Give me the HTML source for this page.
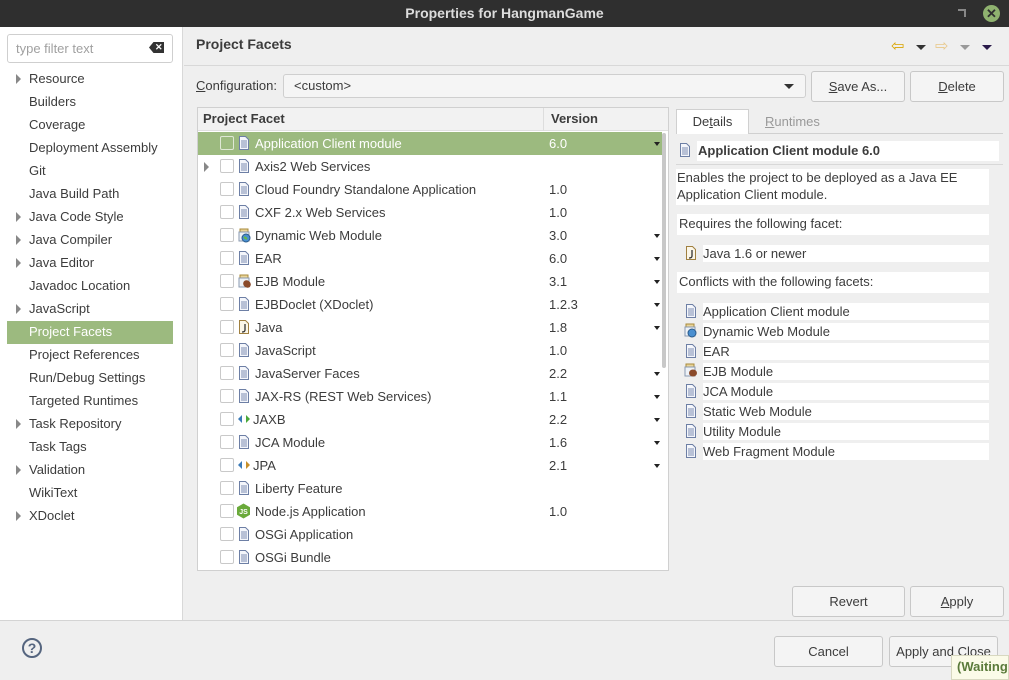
<!DOCTYPE html>
<html><head><meta charset="utf-8"><style>
*{margin:0;padding:0;box-sizing:border-box}
body{width:1009px;height:680px;overflow:hidden;background:#efefef;font-family:"Liberation Sans",sans-serif;font-size:13px;color:#3c3c3c;position:relative}
.a{position:absolute;white-space:nowrap}
.title{left:0;top:0;width:1009px;height:27px;background:#2f2f2f;color:#dcdcdc;font-weight:bold;font-size:14px;text-align:center;line-height:27px}
.left{left:0;top:27px;width:183px;height:593px;background:#fff;border-right:1px solid #d8d8d8}
.ti{left:29px;height:22px;line-height:22px}
.tri{width:0;height:0;border-left:5px solid #888;border-top:5px solid transparent;border-bottom:5px solid transparent}
.btn{background:#f4f4f4;border:1px solid #c8c8c8;border-radius:3px;text-align:center;line-height:29px;height:31px}
.row{left:198px;width:464px;height:23px;line-height:23px}
.cb{position:absolute;left:22px;top:4px;width:14px;height:14px;border:1px solid #c9c9c9;border-radius:2px;background:#fff}
.ic{position:absolute;left:40px;top:4px}
.nm{position:absolute;left:57px}
.vr{position:absolute;left:351px}
.dd{position:absolute;left:456px;top:10px;border-top:4px solid #222;border-left:3px solid transparent;border-right:3px solid transparent}
.sel{background:#9cba7f;color:#fff}
.box{background:#fff;height:20px;line-height:20px}
u{text-decoration:underline}
</style></head><body>
<div class="a title">Properties for HangmanGame</div>
<div class="a" style="left:958px;top:9px;width:8px;height:8px;border-top:2px solid #888;border-right:2px solid #888;transform:rotate(0deg)"></div>
<div class="a" style="left:983px;top:5px;width:17px;height:17px;border-radius:50%;background:#8fb26f;color:#2f2f2f;font-weight:bold;text-align:center;line-height:17px;font-size:13px">✕</div>

<div class="a left"></div>
<div class="a" style="left:7px;top:34px;width:166px;height:29px;border:1px solid #cfcfcf;border-radius:3px;background:#fff;color:#a0a0a0;line-height:27px;padding-left:8px">type filter text</div>
<div class="a" style="left:149px;top:42px;width:15px;height:11px;background:#333;clip-path:polygon(30% 0,100% 0,100% 100%,30% 100%,0 50%)"></div>
<div class="a" style="left:155px;top:42px;color:#fff;font-size:9px;line-height:11px;font-weight:bold">✕</div>

<div class="a" style="left:7px;top:321px;width:166px;height:23px;background:#9cba7f"></div>
<div class="a tri" style="left:16px;top:74px"></div><div class="a ti" style="top:68px">Resource</div>
<div class="a ti" style="top:91px">Builders</div>
<div class="a ti" style="top:114px">Coverage</div>
<div class="a ti" style="top:137px">Deployment Assembly</div>
<div class="a ti" style="top:160px">Git</div>
<div class="a ti" style="top:183px">Java Build Path</div>
<div class="a tri" style="left:16px;top:212px"></div><div class="a ti" style="top:206px">Java Code Style</div>
<div class="a tri" style="left:16px;top:235px"></div><div class="a ti" style="top:229px">Java Compiler</div>
<div class="a tri" style="left:16px;top:258px"></div><div class="a ti" style="top:252px">Java Editor</div>
<div class="a ti" style="top:275px">Javadoc Location</div>
<div class="a tri" style="left:16px;top:304px"></div><div class="a ti" style="top:298px">JavaScript</div>
<div class="a ti" style="top:321px;color:#fff">Project Facets</div>
<div class="a ti" style="top:344px">Project References</div>
<div class="a ti" style="top:367px">Run/Debug Settings</div>
<div class="a ti" style="top:390px">Targeted Runtimes</div>
<div class="a tri" style="left:16px;top:419px"></div><div class="a ti" style="top:413px">Task Repository</div>
<div class="a ti" style="top:436px">Task Tags</div>
<div class="a tri" style="left:16px;top:465px"></div><div class="a ti" style="top:459px">Validation</div>
<div class="a ti" style="top:482px">WikiText</div>
<div class="a tri" style="left:16px;top:511px"></div><div class="a ti" style="top:505px">XDoclet</div>

<div class="a" style="left:196px;top:36px;font-size:14px;font-weight:bold">Project Facets</div>
<div class="a" style="left:184px;top:65px;width:825px;height:1px;background:#d8d8d8"></div>
<div class="a" style="left:891px;top:40px;color:#d9a400;font-size:16px;line-height:14px">⇦</div>
<div class="a" style="left:916px;top:45px;border-top:5px solid #333;border-left:5px solid transparent;border-right:5px solid transparent"></div>
<div class="a" style="left:935px;top:40px;color:#e8c88a;font-size:16px;line-height:14px">⇨</div>
<div class="a" style="left:960px;top:45px;border-top:5px solid #999;border-left:5px solid transparent;border-right:5px solid transparent"></div>
<div class="a" style="left:982px;top:45px;border-top:5px solid #2a1a4a;border-left:5px solid transparent;border-right:5px solid transparent"></div>

<div class="a" style="left:196px;top:78px"><u>C</u>onfiguration:</div>
<div class="a" style="left:283px;top:74px;width:523px;height:24px;border:1px solid #cfcfcf;border-radius:3px;background:#f5f5f5;line-height:22px;padding-left:10px">&lt;custom&gt;</div>
<div class="a" style="left:784px;top:84px;border-top:5px solid #333;border-left:5px solid transparent;border-right:5px solid transparent"></div>
<div class="a btn" style="left:811px;top:71px;width:94px"><u>S</u>ave As...</div>
<div class="a btn" style="left:910px;top:71px;width:94px"><u>D</u>elete</div>

<div class="a" style="left:197px;top:107px;width:472px;height:464px;border:1px solid #d0d0d0;background:#fff"></div>
<div class="a" style="left:198px;top:108px;width:470px;height:23px;background:#f2f2f2;border-bottom:1px solid #e0e0e0;font-weight:bold;line-height:22px"><span style="position:absolute;left:5px">Project Facet</span><span style="position:absolute;left:345px;top:0;height:23px;border-left:1px solid #ddd"></span><span style="position:absolute;left:353px">Version</span></div>
<div class="a" style="left:662px;top:133px;width:4px;height:235px;background:#c8c8c8;border-radius:2px"></div>

<div class="a row sel" style="top:132px"><div class="cb" style="background:transparent;border-color:#dfe8d5"></div><svg class="ic" width="12" height="14"><path d="M1.5 .5h6l3 3v10h-9z" fill="#f4f6fb" stroke="#6d7fa5"/><path d="M3 5h6M3 7h6M3 9h6M3 11h6" stroke="#7b8cb0"/></svg><span class="nm">Application Client module</span><span class="vr">6.0</span><span class="dd"></span></div>
<div class="a row" style="top:155px"><div class="a tri" style="left:6px;top:7px"></div><div class="cb"></div><svg class="ic" width="12" height="14"><path d="M1.5 .5h6l3 3v10h-9z" fill="#f4f6fb" stroke="#6d7fa5"/><path d="M3 5h6M3 7h6M3 9h6M3 11h6" stroke="#7b8cb0"/></svg><span class="nm">Axis2 Web Services</span></div>
<div class="a row" style="top:178px"><div class="cb"></div><svg class="ic" width="12" height="14"><path d="M1.5 .5h6l3 3v10h-9z" fill="#f4f6fb" stroke="#6d7fa5"/><path d="M3 5h6M3 7h6M3 9h6M3 11h6" stroke="#7b8cb0"/></svg><span class="nm">Cloud Foundry Standalone Application</span><span class="vr">1.0</span></div>
<div class="a row" style="top:201px"><div class="cb"></div><svg class="ic" width="12" height="14"><path d="M1.5 .5h6l3 3v10h-9z" fill="#f4f6fb" stroke="#6d7fa5"/><path d="M3 5h6M3 7h6M3 9h6M3 11h6" stroke="#7b8cb0"/></svg><span class="nm">CXF 2.x Web Services</span><span class="vr">1.0</span></div>
<div class="a row" style="top:224px"><div class="cb"></div><svg class="ic" width="15" height="15" style="left:39px"><rect x="3" y="1" width="8" height="3" fill="#e8d49a" stroke="#a88a3a"/><path d="M2 4h10v9H2z" fill="#eef2f7" stroke="#8a9ab0"/><circle cx="9" cy="10" r="4" fill="#4a8fd0" stroke="#2a5a8a"/><path d="M7 9l3 2" stroke="#6b4" stroke-width="2"/></svg><span class="nm">Dynamic Web Module</span><span class="vr">3.0</span><span class="dd"></span></div>
<div class="a row" style="top:247px"><div class="cb"></div><svg class="ic" width="12" height="14"><path d="M1.5 .5h6l3 3v10h-9z" fill="#f4f6fb" stroke="#6d7fa5"/><path d="M3 5h6M3 7h6M3 9h6M3 11h6" stroke="#7b8cb0"/></svg><span class="nm">EAR</span><span class="vr">6.0</span><span class="dd"></span></div>
<div class="a row" style="top:270px"><div class="cb"></div><svg class="ic" width="15" height="15" style="left:39px"><rect x="3" y="1" width="8" height="3" fill="#e8d49a" stroke="#a88a3a"/><path d="M2 4h10v9H2z" fill="#eef2f7" stroke="#8a9ab0"/><ellipse cx="10" cy="10" rx="4" ry="3.5" fill="#8a4a2a" transform="rotate(40 10 10)"/></svg><span class="nm">EJB Module</span><span class="vr">3.1</span><span class="dd"></span></div>
<div class="a row" style="top:293px"><div class="cb"></div><svg class="ic" width="12" height="14"><path d="M1.5 .5h6l3 3v10h-9z" fill="#f4f6fb" stroke="#6d7fa5"/><path d="M3 5h6M3 7h6M3 9h6M3 11h6" stroke="#7b8cb0"/></svg><span class="nm">EJBDoclet (XDoclet)</span><span class="vr">1.2.3</span><span class="dd"></span></div>
<div class="a row" style="top:316px"><div class="cb"></div><svg class="ic" width="12" height="14"><path d="M1.5 .5h6l3 3v10h-9z" fill="#fbf6e8" stroke="#a08040"/><path d="M7 4v6q0 2-3 2" stroke="#333" fill="none" stroke-width="1.3"/></svg><span class="nm">Java</span><span class="vr">1.8</span><span class="dd"></span></div>
<div class="a row" style="top:339px"><div class="cb"></div><svg class="ic" width="12" height="14"><path d="M1.5 .5h6l3 3v10h-9z" fill="#f4f6fb" stroke="#6d7fa5"/><path d="M3 5h6M3 7h6M3 9h6M3 11h6" stroke="#7b8cb0"/></svg><span class="nm">JavaScript</span><span class="vr">1.0</span></div>
<div class="a row" style="top:362px"><div class="cb"></div><svg class="ic" width="12" height="14"><path d="M1.5 .5h6l3 3v10h-9z" fill="#f4f6fb" stroke="#6d7fa5"/><path d="M3 5h6M3 7h6M3 9h6M3 11h6" stroke="#7b8cb0"/></svg><span class="nm">JavaServer Faces</span><span class="vr">2.2</span><span class="dd"></span></div>
<div class="a row" style="top:385px"><div class="cb"></div><svg class="ic" width="12" height="14"><path d="M1.5 .5h6l3 3v10h-9z" fill="#f4f6fb" stroke="#6d7fa5"/><path d="M3 5h6M3 7h6M3 9h6M3 11h6" stroke="#7b8cb0"/></svg><span class="nm">JAX-RS (REST Web Services)</span><span class="vr">1.1</span><span class="dd"></span></div>
<div class="a row" style="top:408px"><div class="cb"></div><svg class="ic" width="14" height="14" style="left:39px;top:5px"><path d="M1 6l4-4v8z" fill="#3a7ab8"/><path d="M13 6l-4-4v8z" fill="#4aa83a"/></svg><span class="nm" style="left:55px">JAXB</span><span class="vr">2.2</span><span class="dd"></span></div>
<div class="a row" style="top:431px"><div class="cb"></div><svg class="ic" width="12" height="14"><path d="M1.5 .5h6l3 3v10h-9z" fill="#f4f6fb" stroke="#6d7fa5"/><path d="M3 5h6M3 7h6M3 9h6M3 11h6" stroke="#7b8cb0"/></svg><span class="nm">JCA Module</span><span class="vr">1.6</span><span class="dd"></span></div>
<div class="a row" style="top:454px"><div class="cb"></div><svg class="ic" width="14" height="14" style="left:39px;top:5px"><path d="M1 6l4-4v8z" fill="#3a7ab8"/><path d="M13 6l-4-4v8z" fill="#c8902a"/></svg><span class="nm" style="left:55px">JPA</span><span class="vr">2.1</span><span class="dd"></span></div>
<div class="a row" style="top:477px"><div class="cb"></div><svg class="ic" width="12" height="14"><path d="M1.5 .5h6l3 3v10h-9z" fill="#f4f6fb" stroke="#6d7fa5"/><path d="M3 5h6M3 7h6M3 9h6M3 11h6" stroke="#7b8cb0"/></svg><span class="nm">Liberty Feature</span></div>
<div class="a row" style="top:500px"><div class="cb"></div><svg class="ic" width="15" height="16" style="left:38px;top:3px"><path d="M7.5 .5l6.5 3.7v7.6l-6.5 3.7L1 11.8V4.2z" fill="#6aaa3a"/><text x="3.2" y="11" font-size="7" font-weight="bold" fill="#fff" font-family="Liberation Sans">JS</text></svg><span class="nm">Node.js Application</span><span class="vr">1.0</span></div>
<div class="a row" style="top:523px"><div class="cb"></div><svg class="ic" width="12" height="14"><path d="M1.5 .5h6l3 3v10h-9z" fill="#f4f6fb" stroke="#6d7fa5"/><path d="M3 5h6M3 7h6M3 9h6M3 11h6" stroke="#7b8cb0"/></svg><span class="nm">OSGi Application</span></div>
<div class="a row" style="top:546px"><div class="cb"></div><svg class="ic" width="12" height="14"><path d="M1.5 .5h6l3 3v10h-9z" fill="#f4f6fb" stroke="#6d7fa5"/><path d="M3 5h6M3 7h6M3 9h6M3 11h6" stroke="#7b8cb0"/></svg><span class="nm">OSGi Bundle</span></div>

<div class="a" style="left:676px;top:133px;width:327px;height:1px;background:#d0d0d0"></div>
<div class="a" style="left:676px;top:109px;width:73px;height:25px;background:#fff;border:1px solid #d0d0d0;border-bottom:none;text-align:center;line-height:24px">De<u>t</u>ails</div>
<div class="a" style="left:765px;top:114px;color:#999"><u>R</u>untimes</div>
<svg class="a" style="left:679px;top:143px" width="12" height="14"><path d="M1.5 .5h6l3 3v10h-9z" fill="#f4f6fb" stroke="#6d7fa5"/><path d="M3 5h6M3 7h6M3 9h6M3 11h6" stroke="#7b8cb0"/></svg>
<div class="a box" style="left:697px;top:141px;width:302px;font-weight:bold;padding-left:1px">Application Client module 6.0</div>
<div class="a" style="left:676px;top:164px;width:327px;height:1px;background:#d8d8d8"></div>
<div class="a" style="left:676px;top:169px;width:313px;height:36px;background:#fff;line-height:17px;padding-left:1px;white-space:normal">Enables the project to be deployed as a Java EE Application Client module.</div>
<div class="a box" style="left:677px;top:214px;width:312px;height:21px;padding-left:2px">Requires the following facet:</div>
<svg class="a" style="left:685px;top:246px" width="12" height="14"><path d="M1.5 .5h6l3 3v10h-9z" fill="#fbf6e8" stroke="#a08040"/><path d="M7 4v6q0 2-3 2" stroke="#333" fill="none" stroke-width="1.3"/></svg>
<div class="a box" style="left:703px;top:245px;width:286px;height:17px;line-height:17px">Java 1.6 or newer</div>
<div class="a box" style="left:677px;top:272px;width:312px;height:21px;padding-left:2px">Conflicts with the following facets:</div>
<svg class="a" style="left:685px;top:304px" width="12" height="14"><path d="M1.5 .5h6l3 3v10h-9z" fill="#f4f6fb" stroke="#6d7fa5"/><path d="M3 5h6M3 7h6M3 9h6M3 11h6" stroke="#7b8cb0"/></svg><div class="a box" style="left:703px;top:303px;width:286px;height:17px;line-height:17px">Application Client module</div>
<svg class="a" style="left:683px;top:323px" width="15" height="15"><rect x="3" y="1" width="8" height="3" fill="#e8d49a" stroke="#a88a3a"/><path d="M2 4h10v9H2z" fill="#eef2f7" stroke="#8a9ab0"/><circle cx="9" cy="10" r="4" fill="#4a8fd0" stroke="#2a5a8a"/></svg><div class="a box" style="left:703px;top:323px;width:286px;height:17px;line-height:17px">Dynamic Web Module</div>
<svg class="a" style="left:685px;top:344px" width="12" height="14"><path d="M1.5 .5h6l3 3v10h-9z" fill="#f4f6fb" stroke="#6d7fa5"/><path d="M3 5h6M3 7h6M3 9h6M3 11h6" stroke="#7b8cb0"/></svg><div class="a box" style="left:703px;top:343px;width:286px;height:17px;line-height:17px">EAR</div>
<svg class="a" style="left:683px;top:363px" width="15" height="15"><rect x="3" y="1" width="8" height="3" fill="#e8d49a" stroke="#a88a3a"/><path d="M2 4h10v9H2z" fill="#eef2f7" stroke="#8a9ab0"/><ellipse cx="10" cy="10" rx="4" ry="3.5" fill="#8a4a2a"/></svg><div class="a box" style="left:703px;top:363px;width:286px;height:17px;line-height:17px">EJB Module</div>
<svg class="a" style="left:685px;top:384px" width="12" height="14"><path d="M1.5 .5h6l3 3v10h-9z" fill="#f4f6fb" stroke="#6d7fa5"/><path d="M3 5h6M3 7h6M3 9h6M3 11h6" stroke="#7b8cb0"/></svg><div class="a box" style="left:703px;top:383px;width:286px;height:17px;line-height:17px">JCA Module</div>
<svg class="a" style="left:685px;top:404px" width="12" height="14"><path d="M1.5 .5h6l3 3v10h-9z" fill="#f4f6fb" stroke="#6d7fa5"/><path d="M3 5h6M3 7h6M3 9h6M3 11h6" stroke="#7b8cb0"/></svg><div class="a box" style="left:703px;top:403px;width:286px;height:17px;line-height:17px">Static Web Module</div>
<svg class="a" style="left:685px;top:424px" width="12" height="14"><path d="M1.5 .5h6l3 3v10h-9z" fill="#f4f6fb" stroke="#6d7fa5"/><path d="M3 5h6M3 7h6M3 9h6M3 11h6" stroke="#7b8cb0"/></svg><div class="a box" style="left:703px;top:423px;width:286px;height:17px;line-height:17px">Utility Module</div>
<svg class="a" style="left:685px;top:444px" width="12" height="14"><path d="M1.5 .5h6l3 3v10h-9z" fill="#f4f6fb" stroke="#6d7fa5"/><path d="M3 5h6M3 7h6M3 9h6M3 11h6" stroke="#7b8cb0"/></svg><div class="a box" style="left:703px;top:443px;width:286px;height:17px;line-height:17px">Web Fragment Module</div>

<div class="a btn" style="left:792px;top:586px;width:113px">Revert</div>
<div class="a btn" style="left:910px;top:586px;width:94px"><u>A</u>pply</div>
<div class="a" style="left:0;top:620px;width:1009px;height:1px;background:#d4d4d4"></div>
<div class="a" style="left:22px;top:638px;width:20px;height:20px;border:2px solid #55657f;border-radius:50%;color:#55657f;font-weight:bold;font-size:14px;text-align:center;line-height:16px">?</div>
<div class="a btn" style="left:774px;top:636px;width:109px">Cancel</div>
<div class="a btn" style="left:889px;top:636px;width:109px">Apply and Close</div>
<div class="a" style="left:951px;top:655px;width:58px;height:25px;background:#fbfbe8;border:1px solid #d8d8c0;color:#5a7a3a;font-weight:bold;line-height:22px;padding-left:5px">(Waiting</div>
</body></html>
